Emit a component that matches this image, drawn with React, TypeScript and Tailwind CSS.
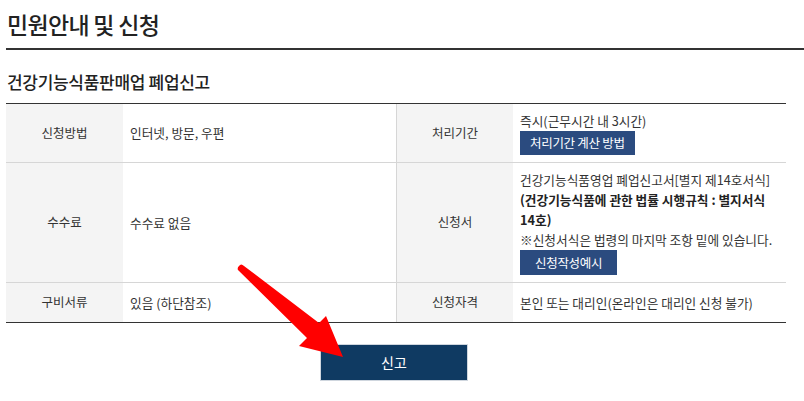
import React from 'react';

const font = { fontFamily: '"Noto Sans CJK KR", "Noto Sans", sans-serif' };

function Label({ children, bordered }: { children: React.ReactNode; bordered?: boolean }) {
  return (
    <div
      className={`w-[117px] shrink-0 bg-[#f4f4f4] flex items-center justify-center text-[12.5px] text-[#333] ${bordered ? 'border-l border-[#d6d6d6]' : ''}`}
    >
      {children}
    </div>
  );
}

function Value({ children }: { children: React.ReactNode }) {
  return (
    <div className="w-[273px] shrink-0 flex flex-col justify-center pl-[7px] py-[7px] text-[12.7px] leading-[20px] text-[#333]">
      {children}
    </div>
  );
}

function SmallButton({ children, wide }: { children: React.ReactNode; wide?: boolean }) {
  return (
    <span
      className={`self-start h-[25px] bg-[#2b4b7f] text-white text-[12.5px] tracking-[-0.3px] flex items-center ${wide ? 'px-[15px]' : 'px-[10px]'}`}
    >
      {children}
    </span>
  );
}

export default function App() {
  return (
    <div className="relative w-[804px] h-[401px] bg-white overflow-hidden" style={font}>
      <div className="pl-[6px]">
        {/* Page title */}
        <div className="h-[50px] flex items-center border-b-2 border-[#333]">
          <h1 className="pl-[1px] text-[23px] font-medium tracking-[-0.7px] text-[#222]">민원안내 및 신청</h1>
        </div>

        <div className="w-[780px]">
          <h2 className="pt-[20px] pb-[9px] pl-[1px] leading-[24px] text-[17px] font-medium tracking-[-0.3px] text-[#222]">
            건강기능식품판매업 폐업신고
          </h2>

          {/* Info table */}
          <div className="border-t border-b border-[#333]">
            <div className="flex h-[59px] border-b border-[#d6d6d6]">
              <Label>신청방법</Label>
              <Value>인터넷, 방문, 우편</Value>
              <Label bordered>처리기간</Label>
              <Value>
                <span>즉시(근무시간 내 3시간)</span>
                <SmallButton>처리기간 계산 방법</SmallButton>
              </Value>
            </div>

            <div className="flex h-[120px] border-b border-[#d6d6d6]">
              <Label>수수료</Label>
              <Value>수수료 없음</Value>
              <Label bordered>신청서</Label>
              <Value>
                <span className="whitespace-nowrap">건강기능식품영업 폐업신고서[별지 제14호서식]</span>
                <span className="whitespace-nowrap font-bold text-[#222]">
                  (건강기능식품에 관한 법률 시행규칙 : 별지서식
                  <br />
                  14호)
                </span>
                <span className="whitespace-nowrap">※신청서식은 법령의 마지막 조항 밑에 있습니다.</span>
                <SmallButton wide>신청작성예시</SmallButton>
              </Value>
            </div>

            <div className="flex h-[39px]">
              <Label>구비서류</Label>
              <Value>있음 (하단참조)</Value>
              <Label bordered>신청자격</Label>
              <Value>본인 또는 대리인(온라인은 대리인 신청 불가)</Value>
            </div>
          </div>

          <div className="flex justify-center pt-[21px] pr-[4px]">
            <button className="w-[148px] h-[37px] bg-[#0f3a62] border border-[#cfd6de] text-white text-[14px]">
              신고
            </button>
          </div>
        </div>
      </div>

      {/* Red pointer arrow */}
      <svg className="absolute inset-0 pointer-events-none" width="804" height="401" viewBox="0 0 804 401">
        <path
          d="M239 266 Q241 263 244 266 L319 323 L326 316 L343 357 L299 346 L307 338 L238 270 Q237 268 239 266 Z"
          fill="#ff0000"
        />
      </svg>
    </div>
  );
}
